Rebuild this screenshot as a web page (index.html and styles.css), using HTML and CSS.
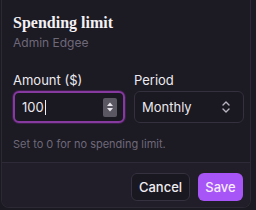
FILE: index.html
```html
<!DOCTYPE html>
<html>
<head>
<meta charset="utf-8">
<link rel="stylesheet" href="styles.css">
</head>
<body>
<div class="dialog">
  <div class="body">
    <h1 class="title">Spending limit</h1>
    <div class="subtitle">Admin Edgee</div>
    <div class="fields">
      <div class="field">
        <label class="label">Amount ($)</label>
        <div class="input focus">
          <span class="value">100</span><span class="caret"></span>
          <span class="spin">
            <svg width="8" height="12" viewBox="0 0 8 12"><path d="M4 1.5L7 5H1z" fill="#e8e6ec"/><path d="M4 10.5L7 7H1z" fill="#e8e6ec"/></svg>
          </span>
        </div>
      </div>
      <div class="field">
        <label class="label">Period</label>
        <div class="input select">
          <span class="value">Monthly</span>
          <svg class="chev" width="10" height="14" viewBox="0 0 10 14"><path d="M2 5L5 2L8 5M2 9L5 12L8 9" fill="none" stroke="#b9b4c2" stroke-width="1.4" stroke-linecap="round" stroke-linejoin="round"/></svg>
        </div>
      </div>
    </div>
    <div class="help">Set to 0 for no spending limit.</div>
  </div>
  <div class="footer">
    <button class="btn cancel">Cancel</button>
    <button class="btn save">Save</button>
  </div>
</div>
</body>
</html>
```

FILE: styles.css
```css
html, body {
  margin: 0;
  padding: 0;
  background: #1b1921;
  width: 256px;
  height: 210px;
  overflow: hidden;
  font-family: Inter, "Noto Sans", sans-serif;
}
.dialog {
  width: 250px;
  margin-left: 1px;
  height: 208px;
  box-sizing: border-box;
  background: #1c1a23;
  border: 1px solid #2c2934;
  border-top: none;
  border-radius: 0 0 8px 8px;
  overflow: hidden;
  display: flex;
  flex-direction: column;
}
.body {
  padding: 13px 7px 0 11px;
  flex: 0 0 auto;
  height: 163px;
  box-sizing: border-box;
  border-bottom: 1px solid #2e2a37;
}
.title {
  margin: 0;
  font-family: "Liberation Serif", serif;
  font-weight: bold;
  font-size: 16px;
  line-height: 20px;
  color: #f3f1f5;
}
.subtitle {
  margin-top: 2px;
  font-size: 12px;
  line-height: 16px;
  color: #6e6979;
}
.fields {
  margin-top: 21px;
  display: grid;
  grid-template-columns: 112px 110px;
  column-gap: 9px;
}
.label {
  display: block;
  font-size: 13px;
  line-height: 16px;
  color: #eceaef;
  margin-bottom: 3px;
}
.input {
  height: 32px;
  box-sizing: border-box;
  border: 1px solid #34303d;
  border-radius: 6px;
  background: #1a1820;
  display: flex;
  align-items: center;
  padding: 0 6px 0 8px;
  font-size: 13px;
  color: #ebe9ee;
}
.input.focus {
  border: 2px solid #86399f;
  box-shadow: 0 0 0 1px #3b1f48;
  padding-left: 7px;
  padding-right: 6px;
}
.value { line-height: 16px; }
.caret {
  width: 1px;
  height: 15px;
  background: #f0eef2;
  margin-left: 1px;
}
.spin {
  margin-left: auto;
  width: 14px;
  height: 19px;
  background: #5a5762;
  border-radius: 2px;
  display: flex;
  align-items: center;
  justify-content: center;
}
.select { justify-content: space-between; padding-left: 7px; padding-right: 12px; }
.help {
  margin-top: 15px;
  font-size: 11px;
  line-height: 13px;
  color: #6e6979;
}
.footer {
  flex: 1;
  background: #211e29;
  display: flex;
  justify-content: flex-end;
  align-items: flex-start;
  gap: 8px;
  padding: 10px 7px 0 0;
}
.btn {
  height: 28px;
  border-radius: 6px;
  font-family: Inter, "Noto Sans", sans-serif;
  font-size: 13px;
  font-weight: 500;
  padding: 0;
  cursor: pointer;
}
.cancel {
  width: 59px;
  background: #19171f;
  border: 1px solid #35313e;
  color: #efedf1;
}
.save {
  width: 45px;
  background: #a855f7;
  border: none;
  color: #f5ecff;
}
```
